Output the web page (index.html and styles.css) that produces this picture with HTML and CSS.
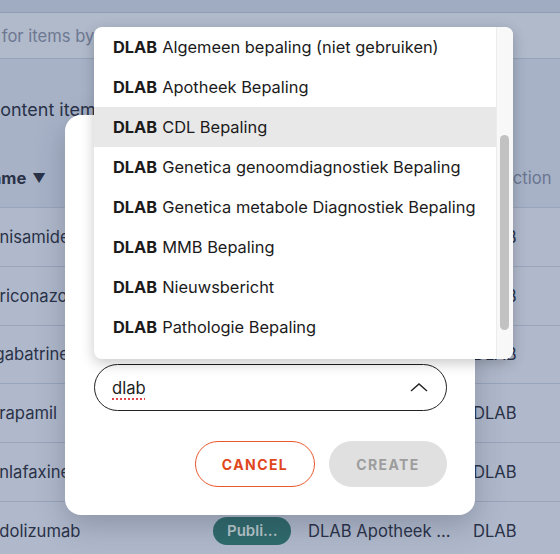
FILE: index.html
```html
<!DOCTYPE html>
<html>
<head>
<meta charset="utf-8">
<link rel="stylesheet" href="styles.css">
</head>
<body>
<div class="screen">
  <div class="app">
    <div class="topbar"></div>
    <div class="searchbar"><span class="search-ph">Search for items by</span></div>
    <h1 class="heading">Content items</h1>
    <div class="table">
      <div class="row thead">
        <div class="cell name-h">Name <span class="sort">&#9660;</span></div>
        <div class="cell"></div>
        <div class="cell"></div>
        <div class="cell col-h">Collection</div>
      </div>
      <div class="row"><div class="cell">Zonisamide</div><div class="cell"></div><div class="cell"></div><div class="cell">DLAB</div></div>
      <div class="row"><div class="cell">Voriconazol</div><div class="cell"></div><div class="cell"></div><div class="cell">DLAB</div></div>
      <div class="row"><div class="cell">Vigabatrine</div><div class="cell"></div><div class="cell"></div><div class="cell">DLAB</div></div>
      <div class="row"><div class="cell">Verapamil</div><div class="cell"></div><div class="cell"></div><div class="cell">DLAB</div></div>
      <div class="row"><div class="cell">Venlafaxine</div><div class="cell"></div><div class="cell"></div><div class="cell">DLAB</div></div>
      <div class="row"><div class="cell">Vedolizumab</div><div class="cell"><span class="pill">Publi...</span></div><div class="cell">DLAB Apotheek ...</div><div class="cell">DLAB</div></div>
    </div>
  </div>

  <div class="modal">
    <div class="select">
      <span class="select-text"><span class="spell">dlab</span></span>
      <svg class="chev" width="18" height="9" viewBox="0 0 18 9"><polyline points="1,8 9,1 17,8" fill="none" stroke="#222" stroke-width="1.4"/></svg>
    </div>
    <div class="actions">
      <button class="btn btn-cancel">CANCEL</button>
      <button class="btn btn-create">CREATE</button>
    </div>
  </div>

  <div class="dropdown">
    <ul class="options">
      <li class="opt"><b>DLAB</b> Algemeen bepaling (niet gebruiken)</li>
      <li class="opt"><b>DLAB</b> Apotheek Bepaling</li>
      <li class="opt opt-active"><b>DLAB</b> CDL Bepaling</li>
      <li class="opt"><b>DLAB</b> Genetica genoomdiagnostiek Bepaling</li>
      <li class="opt"><b>DLAB</b> Genetica metabole Diagnostiek Bepaling</li>
      <li class="opt"><b>DLAB</b> MMB Bepaling</li>
      <li class="opt"><b>DLAB</b> Nieuwsbericht</li>
      <li class="opt"><b>DLAB</b> Pathologie Bepaling</li>
    </ul>
    <div class="track"><div class="thumb"></div></div>
  </div>
</div>
</body>
</html>
```

FILE: styles.css
```css
html, body {
  margin: 0;
  padding: 0;
}
body {
  font-family: Inter, "Noto Sans", sans-serif;
  background: #a7b2c7;
}
.screen {
  position: relative;
  width: 560px;
  height: 554px;
  overflow: hidden;
  background: #a7b2c7;
}
.app {
  width: 560px;
  color: #2a3248;
}
.topbar {
  height: 12px;
  background: #a0acc2;
  border-bottom: 1px solid #8f9cb4;
}
.searchbar {
  height: 45px;
  background: #b0bacb;
  border-bottom: 1px solid #96a3b9;
  display: flex;
  align-items: center;
  overflow: hidden;
}
.search-ph {
  margin-left: -58px;
  font-size: 16.6px;
  color: #6e7891;
  white-space: nowrap;
}
.heading {
  margin: 40px 0 0 -13px;
  height: 22px;
  line-height: 22px;
  font-size: 18px;
  font-weight: 400;
  white-space: nowrap;
}
.table {
  margin-top: 28px;
  margin-left: -21px;
  width: 620px;
}
.row {
  display: grid;
  grid-template-columns: 234px 95px 165px 126px;
  height: 58.8px;
  box-sizing: border-box;
  border-top: 1px solid #97a5bd;
  background: #b0b9cb;
  font-size: 16.6px;
}
.row.thead {
  border-top: none;
  height: 58px;
  background: transparent;
}
.cell {
  display: flex;
  align-items: center;
  white-space: nowrap;
  overflow: hidden;
}
.name-h {
  font-weight: 700;
}
.sort {
  font-size: 13px;
  margin-left: 6px;
}
.col-h {
  color: #6b7690;
}
.pill {
  display: inline-flex;
  align-items: center;
  height: 28px;
  padding: 0 14px;
  border-radius: 14px;
  background: #2f6a6c;
  color: #b7c6ca;
  font-size: 15px;
  font-weight: 600;
}

/* modal */
.modal {
  position: absolute;
  left: 65px;
  top: 115px;
  width: 410px;
  height: 400px;
  box-sizing: border-box;
  padding: 0 28px 28px 29px;
  background: #fff;
  border-radius: 16px;
  box-shadow: 0 10px 30px rgba(30, 40, 60, 0.25);
  display: flex;
  flex-direction: column;
  justify-content: flex-end;
}
.select {
  height: 47px;
  box-sizing: border-box;
  border: 1.4px solid #222;
  border-radius: 24px;
  display: flex;
  align-items: center;
  justify-content: space-between;
  padding: 0 18px 0 17px;
}
.select-text {
  font-size: 16.6px;
  color: #1e1e1e;
}
.spell {
  text-decoration: underline dotted #e0474c;
  text-decoration-thickness: 1.5px;
  text-underline-offset: 5px;
}
.chev {
  display: block;
}
.actions {
  margin-top: 30px;
  display: flex;
  justify-content: flex-end;
  gap: 14px;
}
.btn {
  height: 46px;
  border-radius: 23px;
  font-family: Inter, "Noto Sans", sans-serif;
  font-size: 14px;
  font-weight: 700;
  letter-spacing: 1.4px;
  box-sizing: border-box;
}
.btn-cancel {
  width: 120px;
  background: #fff;
  border: 1.4px solid #e8592c;
  color: #e0461c;
}
.btn-create {
  width: 118px;
  background: #e0e0e0;
  border: none;
  color: #9d9d9d;
}

/* dropdown */
.dropdown {
  position: absolute;
  left: 94px;
  top: 27px;
  width: 419px;
  height: 332px;
  background: #fff;
  border-radius: 8px;
  overflow: hidden;
  box-shadow: 0 4px 14px rgba(0, 0, 0, 0.22);
  display: flex;
}
.options {
  list-style: none;
  margin: 0;
  padding: 0;
  flex: 1;
}
.opt {
  height: 40px;
  display: flex;
  align-items: center;
  padding-left: 19px;
  font-size: 16.4px;
  color: #1b1b1b;
  white-space: nowrap;
}
.opt b {
  font-weight: 700;
  margin-right: 5px;
}
.opt-active {
  background: #e8e8e8;
}
.track {
  width: 17px;
  box-sizing: border-box;
  background: #f8f8f8;
  border-left: 1px solid #ececec;
  padding: 108px 0 0 3px;
}
.thumb {
  width: 9px;
  height: 195px;
  border-radius: 5px;
  background: #c2c2c2;
}
```
